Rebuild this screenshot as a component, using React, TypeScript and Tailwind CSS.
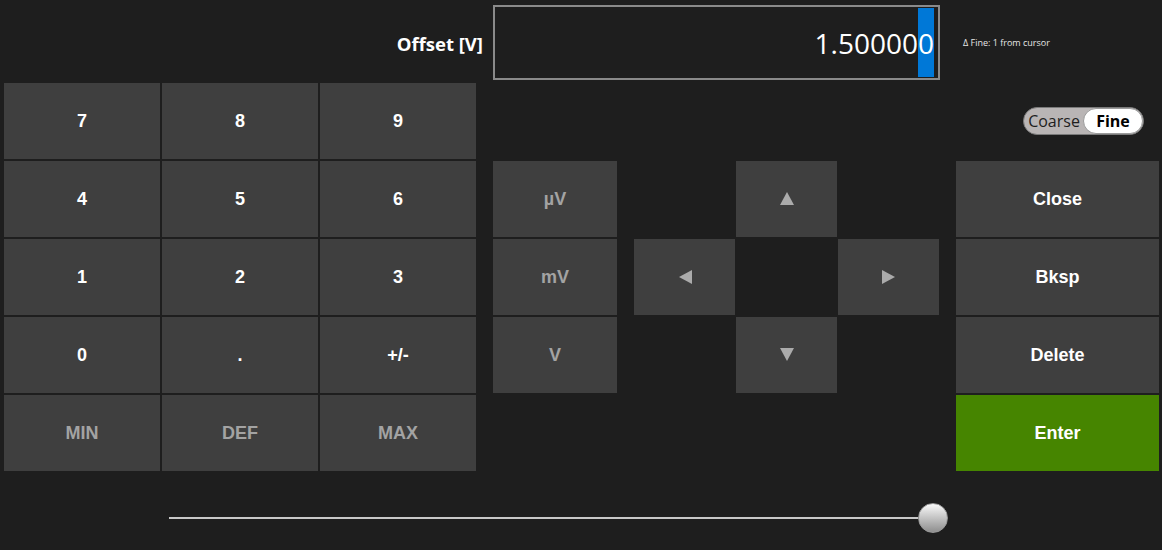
import React from 'react';

const keyBase =
  'flex items-center justify-center bg-[#3f3f3f] font-bold text-[18px] select-none';

const Key: React.FC<{ label?: string; muted?: boolean; green?: boolean; children?: React.ReactNode }> = ({
  label,
  muted,
  green,
  children,
}) => (
  <div
    className={`${keyBase} ${green ? 'bg-[#468500] text-white' : muted ? 'text-[#a3a3a3]' : 'text-white'}`}
  >
    {children ?? label}
  </div>
);

const Arrow: React.FC<{ dir: 'up' | 'down' | 'left' | 'right' }> = ({ dir }) => {
  const points = {
    up: '7,0 14,13 0,13',
    down: '0,0 14,0 7,13',
    left: '14,0 14,14 1,7',
    right: '0,0 13,7 0,14',
  }[dir];
  return (
    <svg width="14" height="14" viewBox="0 0 14 14">
      <polygon points={points} fill="#ababab" />
    </svg>
  );
};

const App: React.FC = () => {
  const keypad = [
    ['7', '8', '9'],
    ['4', '5', '6'],
    ['1', '2', '3'],
    ['0', '.', '+/-'],
  ];

  return (
    <div
      className="w-[1162px] h-[550px] bg-[#1e1e1e] overflow-hidden"
      style={{ fontFamily: '"Liberation Sans", Arial, sans-serif' }}
    >
      {/* header: label, value box, hint */}
      <div className="flex items-center pt-[5px]">
        <div className="w-[493px] flex justify-end pr-[10px] pt-[2px]">
          <span className="text-white text-[18.5px] font-bold font-['Open_Sans',sans-serif]">Offset [V]</span>
        </div>
        <div className="w-[447px] h-[75px] border-2 border-[#8a8a8a] flex justify-end items-stretch pr-[4px] py-[1px]">
          <span className="flex items-center text-white text-[28px] font-['Open_Sans',sans-serif] leading-none">
            1.50000
          </span>
          <span className="flex items-center bg-[#0078d7] text-white text-[28px] font-['Open_Sans',sans-serif] leading-none">
            0
          </span>
        </div>
        <span className="ml-[23px] text-[#e6e6e6] text-[9px] font-['Open_Sans',sans-serif]">
          Δ Fine: 1 from cursor
        </span>
      </div>

      {/* body */}
      <div className="flex mt-[3px] pl-[4px]">
        <div className="grid grid-cols-[156px_156px_156px] auto-rows-[76px] gap-[2px]">
          {keypad.flat().map((k) => (
            <Key key={k} label={k} />
          ))}
          <Key label="MIN" muted />
          <Key label="DEF" muted />
          <Key label="MAX" muted />
        </div>

        <div className="ml-[17px] w-[124px] grid auto-rows-[76px] gap-[2px]">
          <div />
          <Key label="µV" muted />
          <Key label="mV" muted />
          <Key label="V" muted />
        </div>

        <div className="ml-[17px] grid grid-cols-[101px_101px_101px] auto-rows-[76px] gap-x-[1px] gap-y-[2px]">
          <div />
          <div />
          <div />
          <div />
          <Key>
            <Arrow dir="up" />
          </Key>
          <div />
          <Key>
            <Arrow dir="left" />
          </Key>
          <div />
          <Key>
            <Arrow dir="right" />
          </Key>
          <div />
          <Key>
            <Arrow dir="down" />
          </Key>
          <div />
        </div>

        <div className="ml-[17px] w-[203px] grid auto-rows-[76px] gap-[2px]">
          <div className="flex items-center justify-end pr-[15px]">
            <div className="flex items-center w-[121px] h-[28px] rounded-full bg-[#b9b5b5] border border-[#7a7a7a] font-['Open_Sans',sans-serif] text-[16px]">
              <span className="flex-1 text-center text-[#1e1e1e] pl-[1px]">Coarse</span>
              <span className="w-[60px] h-full rounded-full bg-white border border-[#9a9a9a] flex items-center justify-center font-bold text-black">
                Fine
              </span>
            </div>
          </div>
          <Key label="Close" />
          <Key label="Bksp" />
          <Key label="Delete" />
          <Key label="Enter" green />
        </div>
      </div>

      {/* slider */}
      <div className="flex items-center mt-[32px] pl-[169px] h-[30px]">
        <div className="w-[749px] h-[2px] bg-[#c8c8c8]" />
        <div className="w-[30px] h-[30px] rounded-full bg-gradient-to-b from-[#fafafa] to-[#8f8f8f] border border-[#9a9a9a]" />
      </div>
    </div>
  );
};

export default App;
